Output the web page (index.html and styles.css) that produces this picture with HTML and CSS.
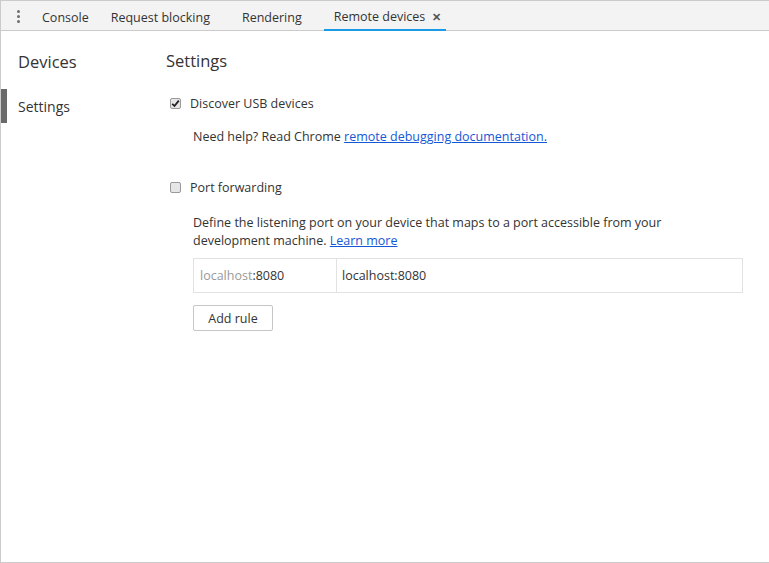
FILE: index.html
```html
<!DOCTYPE html>
<html>
<head>
<meta charset="utf-8">
<link rel="stylesheet" href="styles.css">
</head>
<body>
<div class="window">
  <div class="tabbar">
    <div class="menu-dots"><span></span><span></span><span></span></div>
    <div class="tab t-console">Console</div>
    <div class="tab t-request">Request blocking</div>
    <div class="tab t-render">Rendering</div>
    <div class="tab active">Remote devices <span class="close">✕</span></div>
  </div>
  <div class="content">
    <div class="sidebar">
      <div class="side-title">Devices</div>
      <div class="side-item selected">Settings</div>
    </div>
    <div class="main">
      <div class="main-title">Settings</div>
      <label class="check-row first"><span class="cb checked"><svg width="9" height="9" viewBox="0 0 9 9"><path d="M1.2 4.8 L3.5 7 L7.8 1.6" fill="none" stroke="#222" stroke-width="1.8"/></svg></span>Discover USB devices</label>
      <div class="help">Need help? Read Chrome <a href="#">remote debugging documentation.</a></div>
      <label class="check-row second"><span class="cb"></span>Port forwarding</label>
      <div class="desc">Define the listening port on your device that maps to a port accessible from your<br>development machine. <a href="#">Learn more</a></div>
      <div class="rule-table">
        <div class="cell c1"><span class="dim">localhost</span>:8080</div>
        <div class="cell c2">localhost:8080</div>
      </div>
      <button class="add-btn">Add rule</button>
    </div>
  </div>
</div>
</body>
</html>
```
FILE: styles.css
```css
html, body { margin: 0; padding: 0; background: #fff; }
body { font-family: "Open Sans", "Noto Sans", sans-serif; color: #333; font-size: 12px; }
.window {
  width: 769px; height: 563px; box-sizing: border-box;
  border-left: 1px solid #cbcbcb; border-bottom: 1px solid #cbcbcb; border-top: 1px solid #cbcbcb;
  display: flex; flex-direction: column;
}
.tabbar {
  height: 29px; background: #f3f3f3; border-bottom: 1px solid #cbcbcb;
  display: flex; align-items: stretch; box-sizing: content-box;
}
.menu-dots { width: 34px; display: flex; flex-direction: column; align-items: center; justify-content: center; gap: 2px; padding-left: 1px; padding-top: 1px; box-sizing: border-box; }
.menu-dots span { width: 3px; height: 3px; border-radius: 50%; background: #6e6e6e; }
.tab { display: flex; align-items: center; padding: 3px 9px 0; color: #333; font-size: 12.5px; white-space: nowrap; }
.t-console { padding-left: 7px; padding-right: 22px; }
.t-request { padding-left: 0; padding-right: 32px; }
.t-render { padding-left: 0; padding-right: 22px; }
.tab.active { border-bottom: 2px solid #1a9be6; padding: 2px 5px 0 10px; margin-bottom: -1px; color: #333; }
.close { font-size: 11px; margin-left: 7px; color: #555; font-weight: bold; }
.content { flex: 1; display: flex; }
.sidebar { width: 165px; padding-top: 20px; }
.side-title { font-size: 16.5px; padding-left: 17px; height: 22px; line-height: 22px; color: #333; }
.side-item { font-size: 14px; padding-left: 11px; margin-top: 16px; height: 34px; line-height: 36px; border-left: 6px solid #6a6a6a; }
.main { flex: 1; padding-top: 19px; padding-right: 26px; }
.main-title { font-size: 16.5px; height: 22px; line-height: 22px; }
.check-row { display: flex; align-items: center; font-size: 12.5px; height: 18px; }
.check-row.first { margin-top: 22px; padding-left: 4px; }
.check-row.second { margin-top: 32px; padding-left: 4px; }
.cb { width: 9px; height: 9px; border: 1px solid #9a9a9a; border-radius: 2px; background: #e6e6e6; margin-right: 9px; display: flex; align-items: center; justify-content: center; }
.help { margin-top: 16px; padding-left: 27px; font-size: 12.5px; line-height: 18px; }
a { color: #1558d6; text-decoration: underline; }
.desc { margin-top: 18px; padding-left: 27px; font-size: 12.5px; line-height: 18px; width: 520px; }
.rule-table { margin-top: 8px; margin-left: 27px; height: 33px; border: 1px solid #e2e2e2; display: flex; }
.cell { display: flex; align-items: center; font-size: 12.5px; padding-left: 6px; }
.c1 { width: 136px; border-right: 1px solid #e2e2e2; }
.c2 { flex: 1; padding-left: 5px; }
.dim { color: #9a9a9a; }
.add-btn { margin-top: 12px; margin-left: 27px; width: 80px; height: 26px; border: 1px solid #c6c6c6; background: #fff; border-radius: 2px; font-family: inherit; font-size: 12.5px; color: #333; padding: 0; }
```
